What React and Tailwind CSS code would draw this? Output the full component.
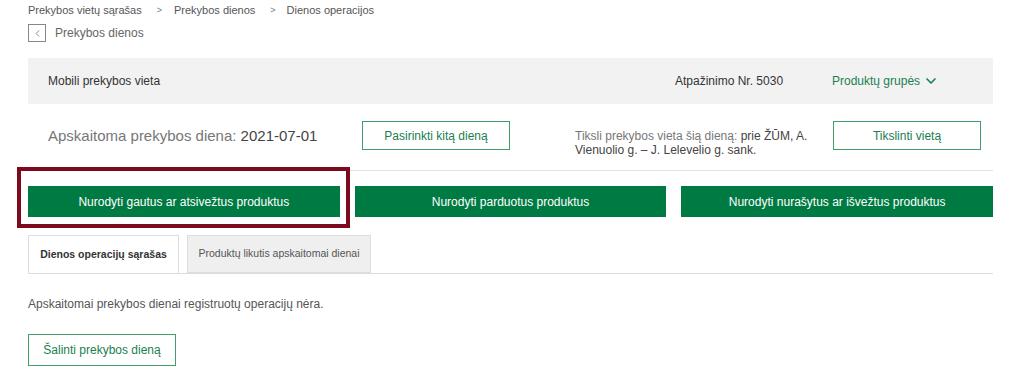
import { ChevronDown, ChevronLeft } from 'lucide-react';

const green = 'bg-[#007a43]';

function OutlineButton({ children, className = '' }) {
    return (
        <button
            className={`border border-[#3f9e6c] bg-white text-[12px] text-[#1a8050] ${className}`}
        >
            {children}
        </button>
    );
}

export default function App() {
    return (
        <div className="min-h-[375px] w-[1011px] bg-white pl-[28px] pr-[18px] font-['Liberation_Sans',Arial,sans-serif] text-[#333]">
            {/* breadcrumbs */}
            <div className="flex h-[20px] items-center pt-[1px] text-[11px] text-[#555]">
                <span>Prekybos vietų sąrašas</span>
                <span className="ml-[15px] mr-[12px] text-[9px] text-[#777]">&gt;</span>
                <span>Prekybos dienos</span>
                <span className="ml-[15px] mr-[11px] text-[9px] text-[#777]">&gt;</span>
                <span>Dienos operacijos</span>
            </div>
            <div className="mt-[4px] flex h-[18px] items-center">
                <div className="flex h-[18px] w-[18px] items-center justify-center border border-[#888]">
                    <ChevronLeft size={11} strokeWidth={1.5} className="text-[#555]" />
                </div>
                <span className="ml-[9px] text-[12px] text-[#666]">Prekybos dienos</span>
            </div>

            {/* gray info bar */}
            <div className="mt-[16px] flex h-[46px] items-center bg-[#f2f2f2] pl-[20px] text-[12px] text-[#333]">
                <span className="flex-1">Mobili prekybos vieta</span>
                <span className="w-[157px]">Atpažinimo Nr. 5030</span>
                <span className="flex w-[161px] items-center text-[#1a8050]">
                    Produktų grupės
                    <ChevronDown size={16} strokeWidth={2.5} className="ml-[3px]" />
                </span>
            </div>

            {/* current day */}
            <div className="flex h-[67px] items-start border-b border-[#e3e3e3] pt-[18px]">
                <div className="w-[334px] pl-[20px] pt-[3px] text-[15px] text-[#777]">
                    Apskaitoma prekybos diena: <span className="text-[#444]">2021-07-01</span>
                </div>
                <OutlineButton className="mt-[-1px] h-[29px] w-[148px]">Pasirinkti kitą dieną</OutlineButton>
                <div className="ml-[65px] mr-[13px] w-[245px] pt-[7px] text-[12px] leading-[14px] text-[#777]">
                    Tiksli prekybos vieta šią dieną: <span className="text-[#444]">prie ŽŪM, A. Vienuolio g. – J. Lelevelio g. sank.</span>
                </div>
                <OutlineButton className="mt-[-1px] h-[29px] w-[148px]">Tikslinti vietą</OutlineButton>
            </div>

            {/* action buttons */}
            <div className="relative mt-[15px] grid grid-cols-3 gap-[15px]">
                <div className="pointer-events-none absolute left-[-11px] top-[-19px] h-[61px] w-[333px] border-[4px] border-[#7d0a1c]" />
                {[
                    'Nurodyti gautus ar atsivežtus produktus',
                    'Nurodyti parduotus produktus',
                    'Nurodyti nurašytus ar išvežtus produktus',
                ].map((label) => (
                    <button key={label} className={`${green} h-[31px] text-[12px] text-white`}>
                        {label}
                    </button>
                ))}
            </div>

            {/* tabs */}
            <div className="mt-[19px] flex h-[38px] items-end border-b border-[#ddd]">
                <div className="flex h-[38px] w-[151px] items-center justify-center border border-b-0 border-[#ddd] bg-white text-[10.5px] font-bold text-[#333]">
                    Dienos operacijų sąrašas
                </div>
                <div className="ml-[8px] flex h-[38px] w-[184px] items-center justify-center border border-[#ddd] bg-[#efefef] text-[10.5px] text-[#555]">
                    Produktų likutis apskaitomai dienai
                </div>
            </div>

            <div className="mt-[21px] text-[12px] text-[#555]">
                Apskaitomai prekybos dienai registruotų operacijų nėra.
            </div>

            <OutlineButton className="mt-[21px] h-[32px] w-[148px] text-[12.5px]">Šalinti prekybos dieną</OutlineButton>
        </div>
    );
}
